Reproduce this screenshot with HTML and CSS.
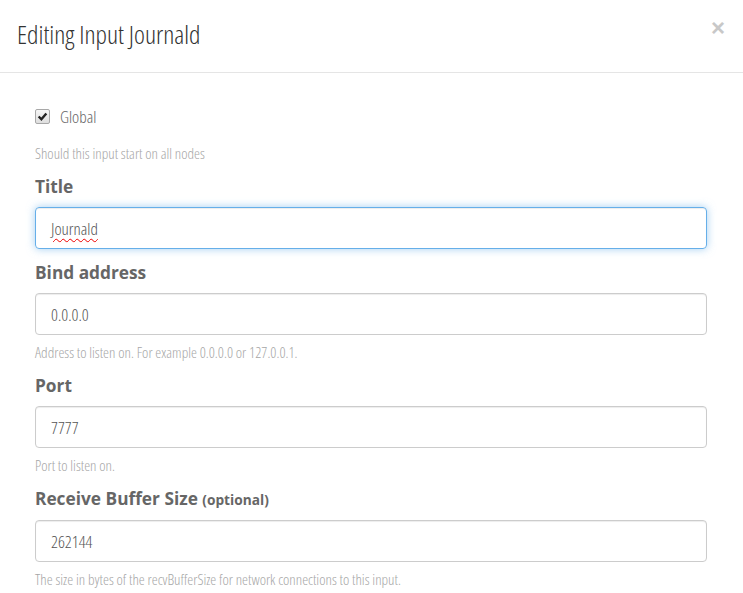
FILE: index.html
```html
<!DOCTYPE html>
<html>
<head>
<meta charset="utf-8">
<link rel="stylesheet" href="styles.css">
</head>
<body>
<div class="modal">
  <div class="modal-header">
    <h2 class="modal-title">Editing Input Journald</h2>
    <span class="close">×</span>
  </div>
  <div class="modal-body">
    <div class="check-group">
      <label class="check-label"><span class="checkbox"><svg viewBox="0 0 12 12" width="11" height="11"><path d="M1.8 6 L4.8 9 L10.2 2.8" fill="none" stroke="#222" stroke-width="2.6"/></svg></span>Global</label>
      <p class="help">Should this input start on all nodes</p>
    </div>
    <div class="group">
      <label class="label">Title</label>
      <div class="input focused"><span class="spell">Journald</span></div>
    </div>
    <div class="group">
      <label class="label">Bind address</label>
      <div class="input">0.0.0.0</div>
      <p class="help">Address to listen on. For example 0.0.0.0 or 127.0.0.1.</p>
    </div>
    <div class="group">
      <label class="label">Port</label>
      <div class="input">7777</div>
      <p class="help">Port to listen on.</p>
    </div>
    <div class="group">
      <label class="label">Receive Buffer Size <small class="opt">(optional)</small></label>
      <div class="input">262144</div>
      <p class="help">The size in bytes of the recvBufferSize for network connections to this input.</p>
    </div>
  </div>
</div>
</body>
</html>
```
FILE: styles.css
```css
html, body { margin: 0; padding: 0; background: #fff; }
body { font-family: "Open Sans", "Liberation Sans", sans-serif; color: #666; }
.modal { width: 743px; }
.modal-header {
  height: 73px;
  border-bottom: 1px solid #e5e5e5;
  display: flex;
  align-items: center;
  justify-content: space-between;
  padding: 0 17px 0 17px;
  box-sizing: border-box;
}
.modal-title {
  margin: 0;
  font-weight: 300;
  font-stretch: 75%;
  font-size: 26px;
  color: #333;
  position: relative;
  top: -2px;
}
.close {
  font-family: "Liberation Sans", sans-serif;
  font-weight: bold;
  font-size: 24px;
  color: #c8c8c8;
  position: relative;
  top: -8px;
  right: 1px;
}
.modal-body { padding: 27px 36px 0 35px; }
.check-label {
  display: flex;
  align-items: center;
  font-weight: 300;
  font-stretch: 75%;
  font-size: 17px;
  color: #666;
  height: 32px;
}
.checkbox {
  width: 13px; height: 13px;
  border: 1px solid #a8a8a8;
  border-radius: 2px;
  background: linear-gradient(#f6f6f6, #dedede);
  display: inline-flex; align-items: center; justify-content: center;
  margin-right: 10px;
}
.help {
  margin: 0;
  font-weight: 300;
  font-stretch: 75%;
  font-size: 15px;
  line-height: 20px;
  color: #a6a6a6;
}
.check-group .help { margin-top: 11px; }
.group { margin-top: 12px; }
.label {
  display: block;
  font-weight: 700;
  font-size: 17.3px;
  color: #666;
  line-height: 24px;
}
.opt { font-size: 13.7px; }
.input {
  margin-top: 8px;
  height: 42px;
  box-sizing: border-box;
  border: 1px solid #ccc;
  border-radius: 4px;
  padding: 0 15px;
  display: flex;
  align-items: center;
  font-weight: 300;
  font-stretch: 75%;
  font-size: 17px;
  color: #555;
  box-shadow: inset 0 1px 1px rgba(0,0,0,0.075);
}
.input.focused {
  border-color: #66afe9;
  box-shadow: inset 0 1px 1px rgba(0,0,0,.075), 0 0 8px rgba(102,175,233,.6);
}
.spell {
  text-decoration: underline wavy #e00;
  text-decoration-thickness: 1px;
  text-underline-offset: 3px;
}
.group .help { margin-top: 7px; margin-bottom: 1px; }
```
